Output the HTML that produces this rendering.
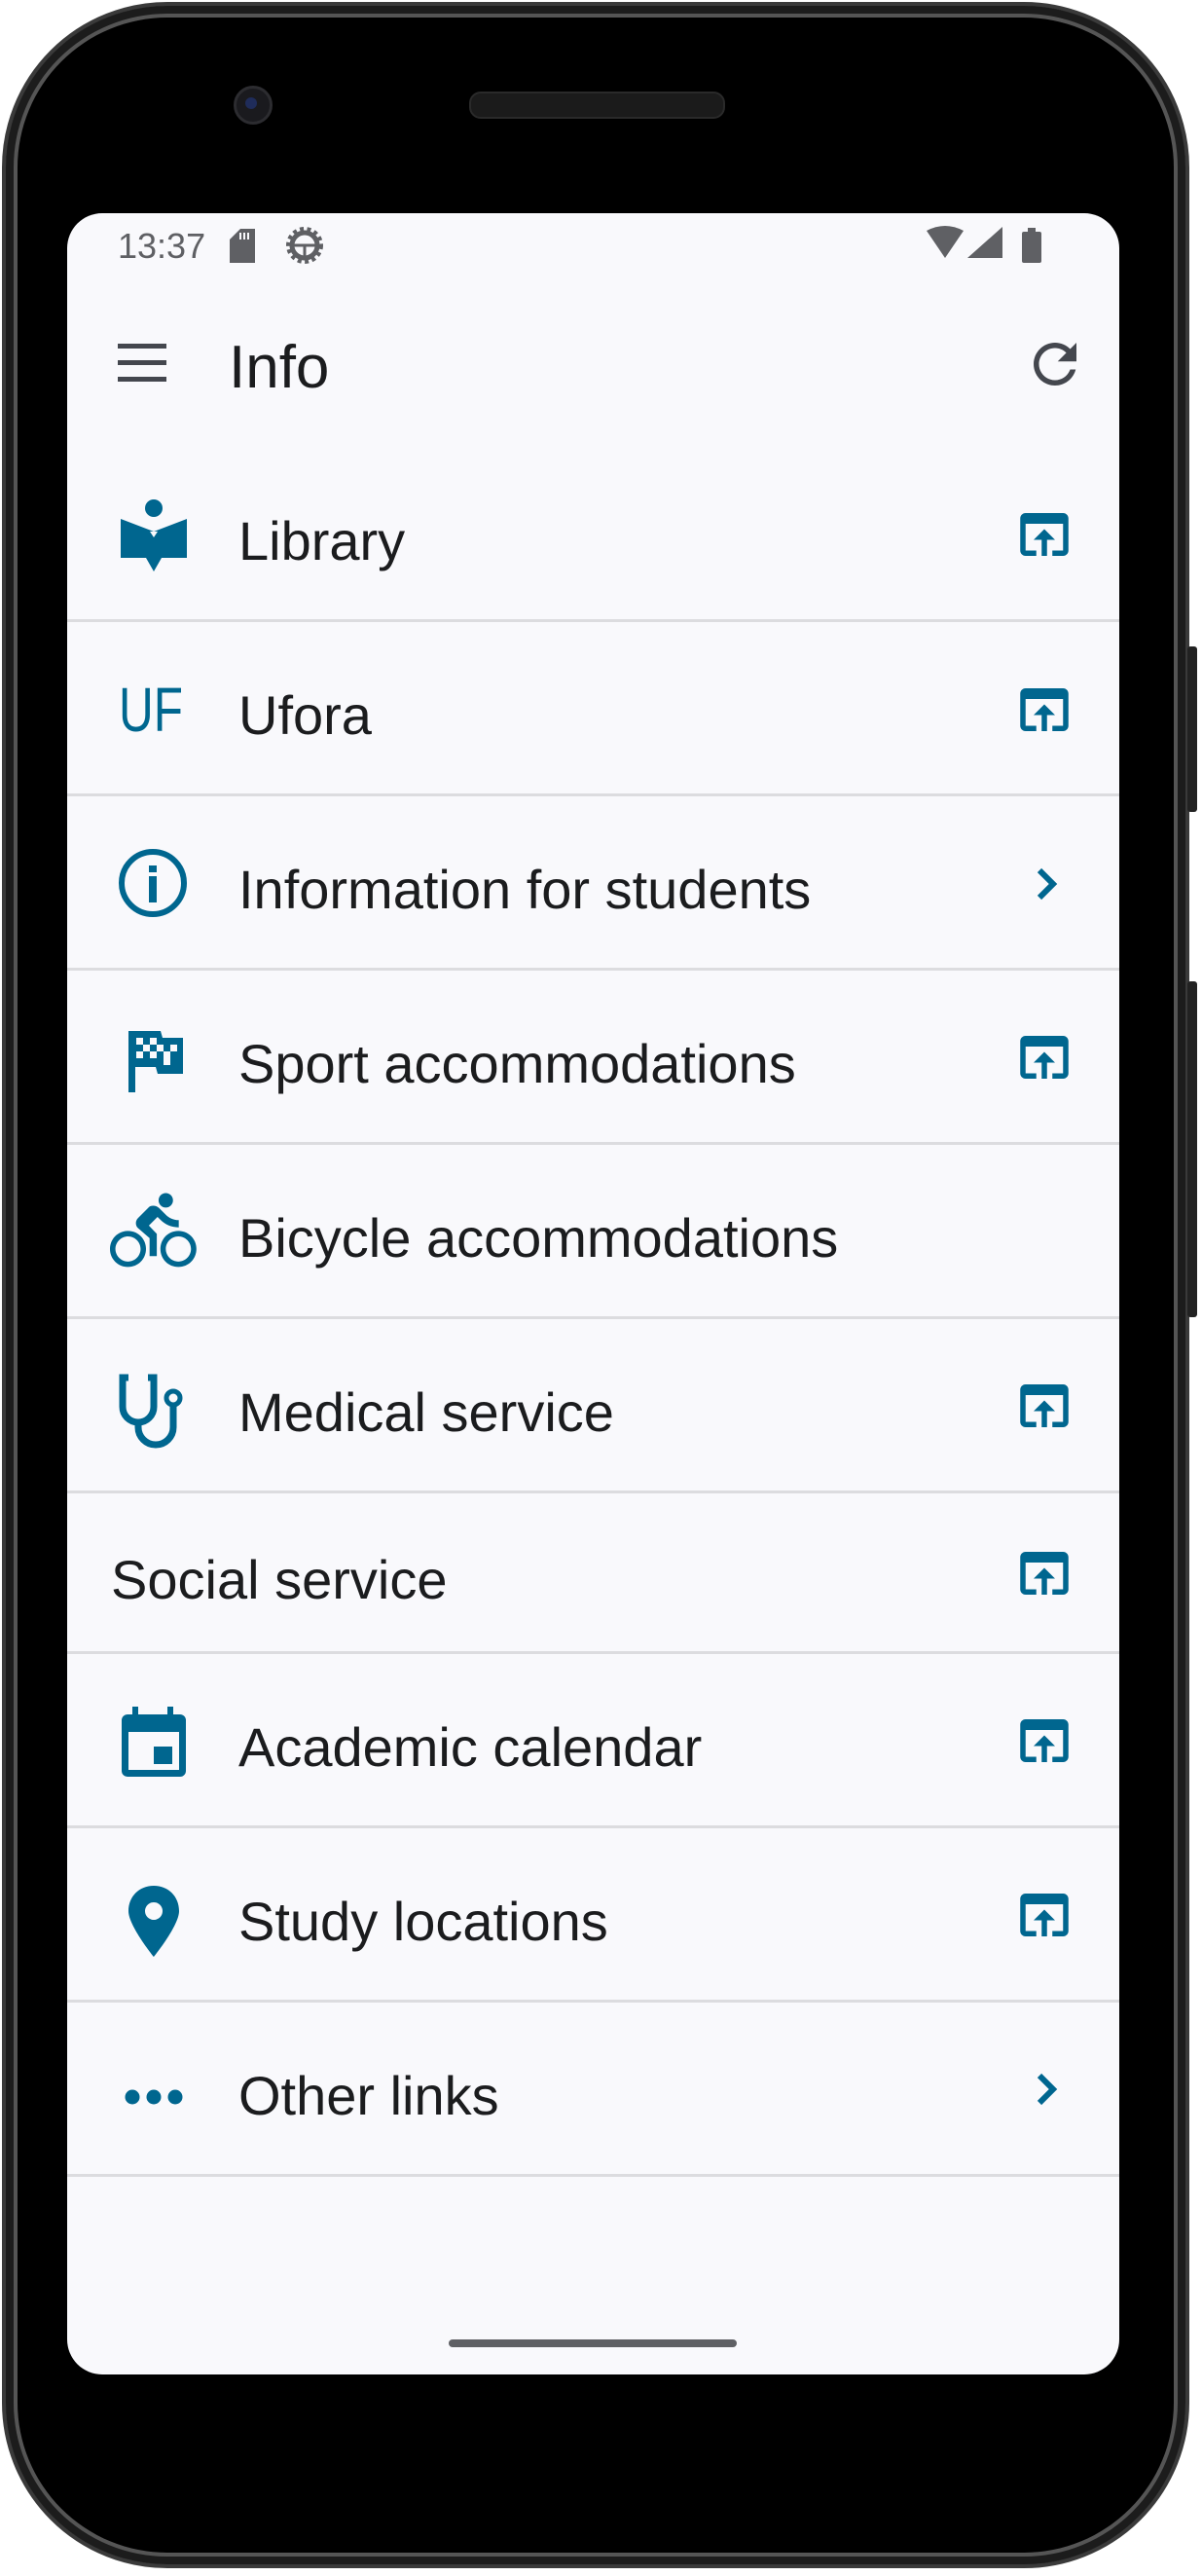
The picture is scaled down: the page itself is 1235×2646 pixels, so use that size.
<!DOCTYPE html>
<html><head><meta charset="utf-8">
<style>
html,body{margin:0;padding:0;background:#fff;}
body{width:1235px;height:2646px;position:relative;overflow:hidden;font-family:"Liberation Sans",sans-serif;}
.abs{position:absolute;}
.phone{left:2px;top:2px;width:1220px;height:2636px;border-radius:170px;background:#000;border:4px solid #3a3a3a;box-sizing:border-box;box-shadow:inset 0 0 0 8px #1c1c1c, inset 0 0 0 12px #555;}
.screen{left:69px;top:219px;width:1081px;height:2220px;background:#f9f9fc;border-radius:36px;overflow:hidden;}
.t{position:absolute;font-size:56px;color:#1b1c1e;line-height:1;white-space:nowrap;}
.div{position:absolute;left:0;width:1081px;height:3px;background:#dcdcdf;}
</style></head><body>
<div class="abs phone"></div>
<div class="abs" style="left:1220px;top:664px;width:10px;height:170px;background:#222;border-radius:3px"></div>
<div class="abs" style="left:1220px;top:1008px;width:10px;height:345px;background:#222;border-radius:3px"></div>
<div class="abs" style="left:240px;top:88px;width:34px;height:34px;border-radius:50%;background:#1a1a1e;border:3px solid #2c2c30"></div>
<div class="abs" style="left:252px;top:100px;width:12px;height:12px;border-radius:50%;background:#1f2c5a"></div>
<div class="abs" style="left:482px;top:94px;width:259px;height:24px;border-radius:12px;background:#1b1b1b;border:2px solid #2a2a2a"></div>

<div class="abs screen">
  <div class="t" style="left:52px;top:16px;font-size:36px;color:#5f6064">13:37</div>
  <svg class="abs" style="left:0;top:0" width="1081" height="200">
    <path d="M178 16h15v35h-26V27z" fill="#5f6064"/>
    <rect x="177" y="20" width="2" height="7" fill="#f9f9fc"/><rect x="181" y="20" width="2" height="7" fill="#f9f9fc"/><rect x="185" y="20" width="2" height="7" fill="#f9f9fc"/>
    <g transform="translate(244,33)" fill="none" stroke="#5f6064">
      <circle r="13" stroke-width="5"/>
      <circle r="17" stroke-width="4" stroke-dasharray="4 3.5"/>
      <path d="M-12 0h24M0 0v13" stroke-width="3"/>
    </g>
    <path d="M883 18 Q902 8 921 18 L902 46z" fill="#5f6064"/>
    <path d="M925 46 L961 46 L961 14z" fill="#5f6064"/>
    <rect x="981" y="19" width="20" height="32" rx="2" fill="#5f6064"/><rect x="987" y="15" width="8" height="5" fill="#5f6064"/>
    <rect x="52" y="134" width="50" height="5" fill="#44474e"/>
    <rect x="52" y="151" width="50" height="5" fill="#44474e"/>
    <rect x="52" y="168" width="50" height="5" fill="#44474e"/>
    <g transform="translate(982,122) scale(2.75)">
      <path fill="#44474e" d="M17.65 6.35C16.2 4.9 14.21 4 12 4c-4.42 0-7.99 3.58-7.99 8s3.57 8 7.99 8c3.73 0 6.84-2.55 7.73-6h-2.08c-.82 2.33-3.04 4-5.65 4-3.31 0-6-2.69-6-6s2.69-6 6-6c1.66 0 3.14.69 4.22 1.78L13 11h7V4l-2.35 2.35z"/>
    </g>
  </svg>
  <div class="t" style="left:166px;top:128px;font-size:62px;color:#1b1c1e">Info</div>

  <div class="t" style="left:176px;top:309px">Library</div>
  <div class="div" style="top:417px"></div>
  <div class="t" style="left:176px;top:488px">Ufora</div>
  <div class="div" style="top:596px"></div>
  <div class="t" style="left:176px;top:667px">Information for students</div>
  <div class="div" style="top:775px"></div>
  <div class="t" style="left:176px;top:846px">Sport accommodations</div>
  <div class="div" style="top:954px"></div>
  <div class="t" style="left:176px;top:1025px">Bicycle accommodations</div>
  <div class="div" style="top:1133px"></div>
  <div class="t" style="left:176px;top:1204px">Medical service</div>
  <div class="div" style="top:1312px"></div>
  <div class="t" style="left:45px;top:1376px">Social service</div>
  <div class="div" style="top:1477px"></div>
  <div class="t" style="left:176px;top:1548px">Academic calendar</div>
  <div class="div" style="top:1656px"></div>
  <div class="t" style="left:176px;top:1727px">Study locations</div>
  <div class="div" style="top:1835px"></div>
  <div class="t" style="left:176px;top:1906px">Other links</div>
  <div class="div" style="top:2014px"></div>
  <div class="abs" style="left:392px;top:2184px;width:296px;height:8px;border-radius:4px;background:#5f6064"></div>
</div>

<svg class="abs" style="left:0;top:0" width="1235" height="2646">
  <defs>
    <g id="ob"><path fill="#00668f" d="M19 4H5c-1.11 0-2 .9-2 2v12c0 1.1.89 2 2 2h4v-2H5V8h14v10h-4v2h4c1.1 0 2-.9 2-2V6c0-1.1-.89-2-2-2zm-7 6l-4 4h3v6h2v-6h3l-4-4z"/></g>
  </defs>
  <g fill="#00668f">
    <circle cx="158" cy="522" r="9"/>
    <path d="M124 533 L158 546 L192 533 L192 573 L166 573 L158 587 L150 573 L124 573z"/>
    <path d="M154 546 L162 546 L158 552z" fill="#f9f9fc"/>
    <text x="122" y="751" font-family="Liberation Sans Narrow, Liberation Sans, sans-serif" font-size="64" fill="#00668f" textLength="66" lengthAdjust="spacingAndGlyphs">UF</text>
    <g transform="translate(0,1)">
    <circle cx="157" cy="906" r="32" fill="none" stroke="#00668f" stroke-width="6"/>
    <rect x="153" y="888" width="8" height="7"/><rect x="153" y="899" width="8" height="27"/>
    </g>
    <g transform="translate(0,2)">
    <rect x="132" y="1057" width="7" height="63"/>
    <path d="M132 1057 H165 L167 1064 H188 V1101 H162 L160 1094 H132z"/>
    <g fill="#f9f9fc">
      <rect x="140" y="1064" width="7" height="7"/><rect x="154" y="1064" width="7" height="7"/>
      <rect x="147" y="1071" width="7" height="7"/><rect x="161" y="1071" width="7" height="7"/>
      <rect x="140" y="1078" width="7" height="7"/><rect x="154" y="1078" width="7" height="7"/><rect x="168" y="1078" width="7" height="7"/>
      <rect x="175" y="1071" width="7" height="7"/>
      <rect x="168" y="1085" width="7" height="7"/>
    </g>
    </g>
    <g transform="translate(113,1220) scale(3.7)">
      <path d="M15.5 5.5c1.1 0 2-.9 2-2s-.9-2-2-2-2 .9-2 2 .9 2 2 2zM5 12c-2.8 0-5 2.2-5 5s2.2 5 5 5 5-2.2 5-5-2.2-5-5-5zm0 8.5c-1.9 0-3.5-1.6-3.5-3.5s1.6-3.5 3.5-3.5 3.5 1.6 3.5 3.5-1.6 3.5-3.5 3.5zm5.8-10l2.4-2.4.8.8c1.3 1.3 3 2.1 5.1 2.1V9c-1.5 0-2.7-.6-3.6-1.5l-1.9-1.9c-.5-.4-1-.6-1.6-.6s-1.1.2-1.4.6L7.8 8.4c-.4.4-.6.9-.6 1.4 0 .6.2 1.1.6 1.4L11 14v5h2v-6.2l-2.2-2.3zM19 12c-2.8 0-5 2.2-5 5s2.2 5 5 5 5-2.2 5-5-2.2-5-5-5zm0 8.5c-1.9 0-3.5-1.6-3.5-3.5s1.6-3.5 3.5-3.5 3.5 1.6 3.5 3.5-1.6 3.5-3.5 3.5z"/>
    </g>
    <g fill="none" stroke="#00668f" stroke-width="7" transform="translate(0,4)">
      <path d="M132 1411 H126 V1441 A16 16 0 0 0 158 1441 V1411 H152"/>
      <path d="M142 1457 V1462 A18 18 0 0 0 178 1462 V1441"/>
      <circle cx="178" cy="1432" r="7" stroke-width="5"/>
    </g>
    <g transform="translate(0,5)">
    <rect x="136" y="1748" width="6" height="10"/><rect x="172" y="1748" width="6" height="10"/>
    <path d="M131 1756 H185 A6 6 0 0 1 191 1762 V1814 A6 6 0 0 1 185 1820 H131 A6 6 0 0 1 125 1814 V1762 A6 6 0 0 1 131 1756z M132 1774 V1813 H184 V1774z" fill-rule="evenodd"/>
    <rect x="158" y="1789" width="19" height="18"/>
    </g>
    <g transform="translate(0,6)">
    <path d="M158 1931 C143 1931 132 1942 132 1957 C132 1972 158 2004 158 2004 C158 2004 184 1972 184 1957 C184 1942 173 1931 158 1931z M158 1948 A9 9 0 1 0 158.01 1948z" fill-rule="evenodd"/>
    </g>
    <g transform="translate(0,7)">
    <circle cx="136" cy="2147" r="7.5"/><circle cx="158" cy="2147" r="7.5"/><circle cx="180" cy="2147" r="7.5"/>
    </g>
  </g>
  <use href="#ob" transform="translate(1040,516) scale(2.75)"/>
  <use href="#ob" transform="translate(1040,696) scale(2.75)"/>
  <use href="#ob" transform="translate(1040,1053) scale(2.75)"/>
  <use href="#ob" transform="translate(1040,1411) scale(2.75)"/>
  <use href="#ob" transform="translate(1040,1583) scale(2.75)"/>
  <use href="#ob" transform="translate(1040,1755) scale(2.75)"/>
  <use href="#ob" transform="translate(1040,1934) scale(2.75)"/>
  <g fill="none" stroke="#00668f" stroke-width="6">
    <path d="M1068 894 L1082 908 L1068 922"/>
    <path d="M1068 2132 L1082 2146 L1068 2160"/>
  </g>
</svg>
</body></html>
